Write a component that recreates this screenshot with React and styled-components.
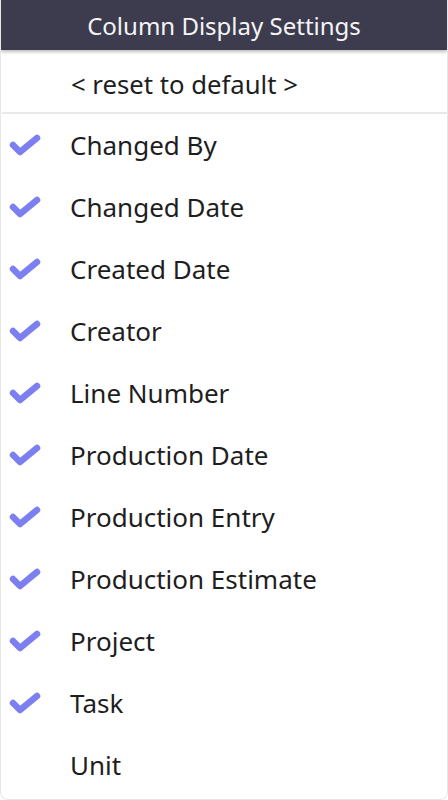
import React from "react";
import styled, { createGlobalStyle } from "styled-components";

const Global = createGlobalStyle`
  html, body { margin: 0; padding: 0; background: #ffffff; }
  body { font-family: "Noto Sans", "Open Sans", sans-serif; }
`;

const Panel = styled.div`
  width: 448px;
  height: 800px;
  box-sizing: border-box;
  border: 1px solid #e6e6e6;
  border-top: none;
  border-radius: 0 0 8px 8px;
  background: #ffffff;
  display: flex;
  flex-direction: column;
  overflow: hidden;
`;

const Header = styled.div`
  height: 50px;
  flex: 0 0 50px;
  background: #3d3c4e;
  color: #f4f4f6;
  display: flex;
  align-items: center;
  justify-content: center;
  font-size: 24px;
  box-shadow: 0 2px 3px rgba(0, 0, 0, 0.25);
  position: relative;
  z-index: 1;
`;

const ResetRow = styled.div`
  height: 64px;
  flex: 0 0 64px;
  display: flex;
  align-items: center;
  padding: 6px 0 0 69px;
  box-sizing: border-box;
  font-size: 25.7px;
  color: #1e1e1e;
  border-bottom: 2px solid #e8e8e8;
  margin-left: 1px;
`;

const List = styled.div`
  display: flex;
  flex-direction: column;
`;

const Item = styled.div`
  height: 62px;
  flex: 0 0 62px;
  display: flex;
  align-items: center;
  font-size: 26px;
  color: #1e1e1e;
`;

const CheckCell = styled.div`
  width: 69px;
  display: flex;
  align-items: center;
  padding-left: 7px;
  box-sizing: border-box;
`;

const Check = () => (
  <svg width="34" height="26" viewBox="0 0 34 26">
    <path
      d="M5 13 L12 20 L29 6"
      fill="none"
      stroke="#7c7ff0"
      strokeWidth="6.5"
      strokeLinecap="round"
      strokeLinejoin="round"
    />
  </svg>
);

const items = [
  ["Changed By", true],
  ["Changed Date", true],
  ["Created Date", true],
  ["Creator", true],
  ["Line Number", true],
  ["Production Date", true],
  ["Production Entry", true],
  ["Production Estimate", true],
  ["Project", true],
  ["Task", true],
  ["Unit", false],
];

export default function App() {
  return (
    <>
      <Global />
      <Panel>
        <Header>Column Display Settings</Header>
        <ResetRow>&lt; reset to default &gt;</ResetRow>
        <List>
          {items.map(([label, checked]) => (
            <Item key={label}>
              <CheckCell>{checked && <Check />}</CheckCell>
              {label}
            </Item>
          ))}
        </List>
      </Panel>
    </>
  );
}
